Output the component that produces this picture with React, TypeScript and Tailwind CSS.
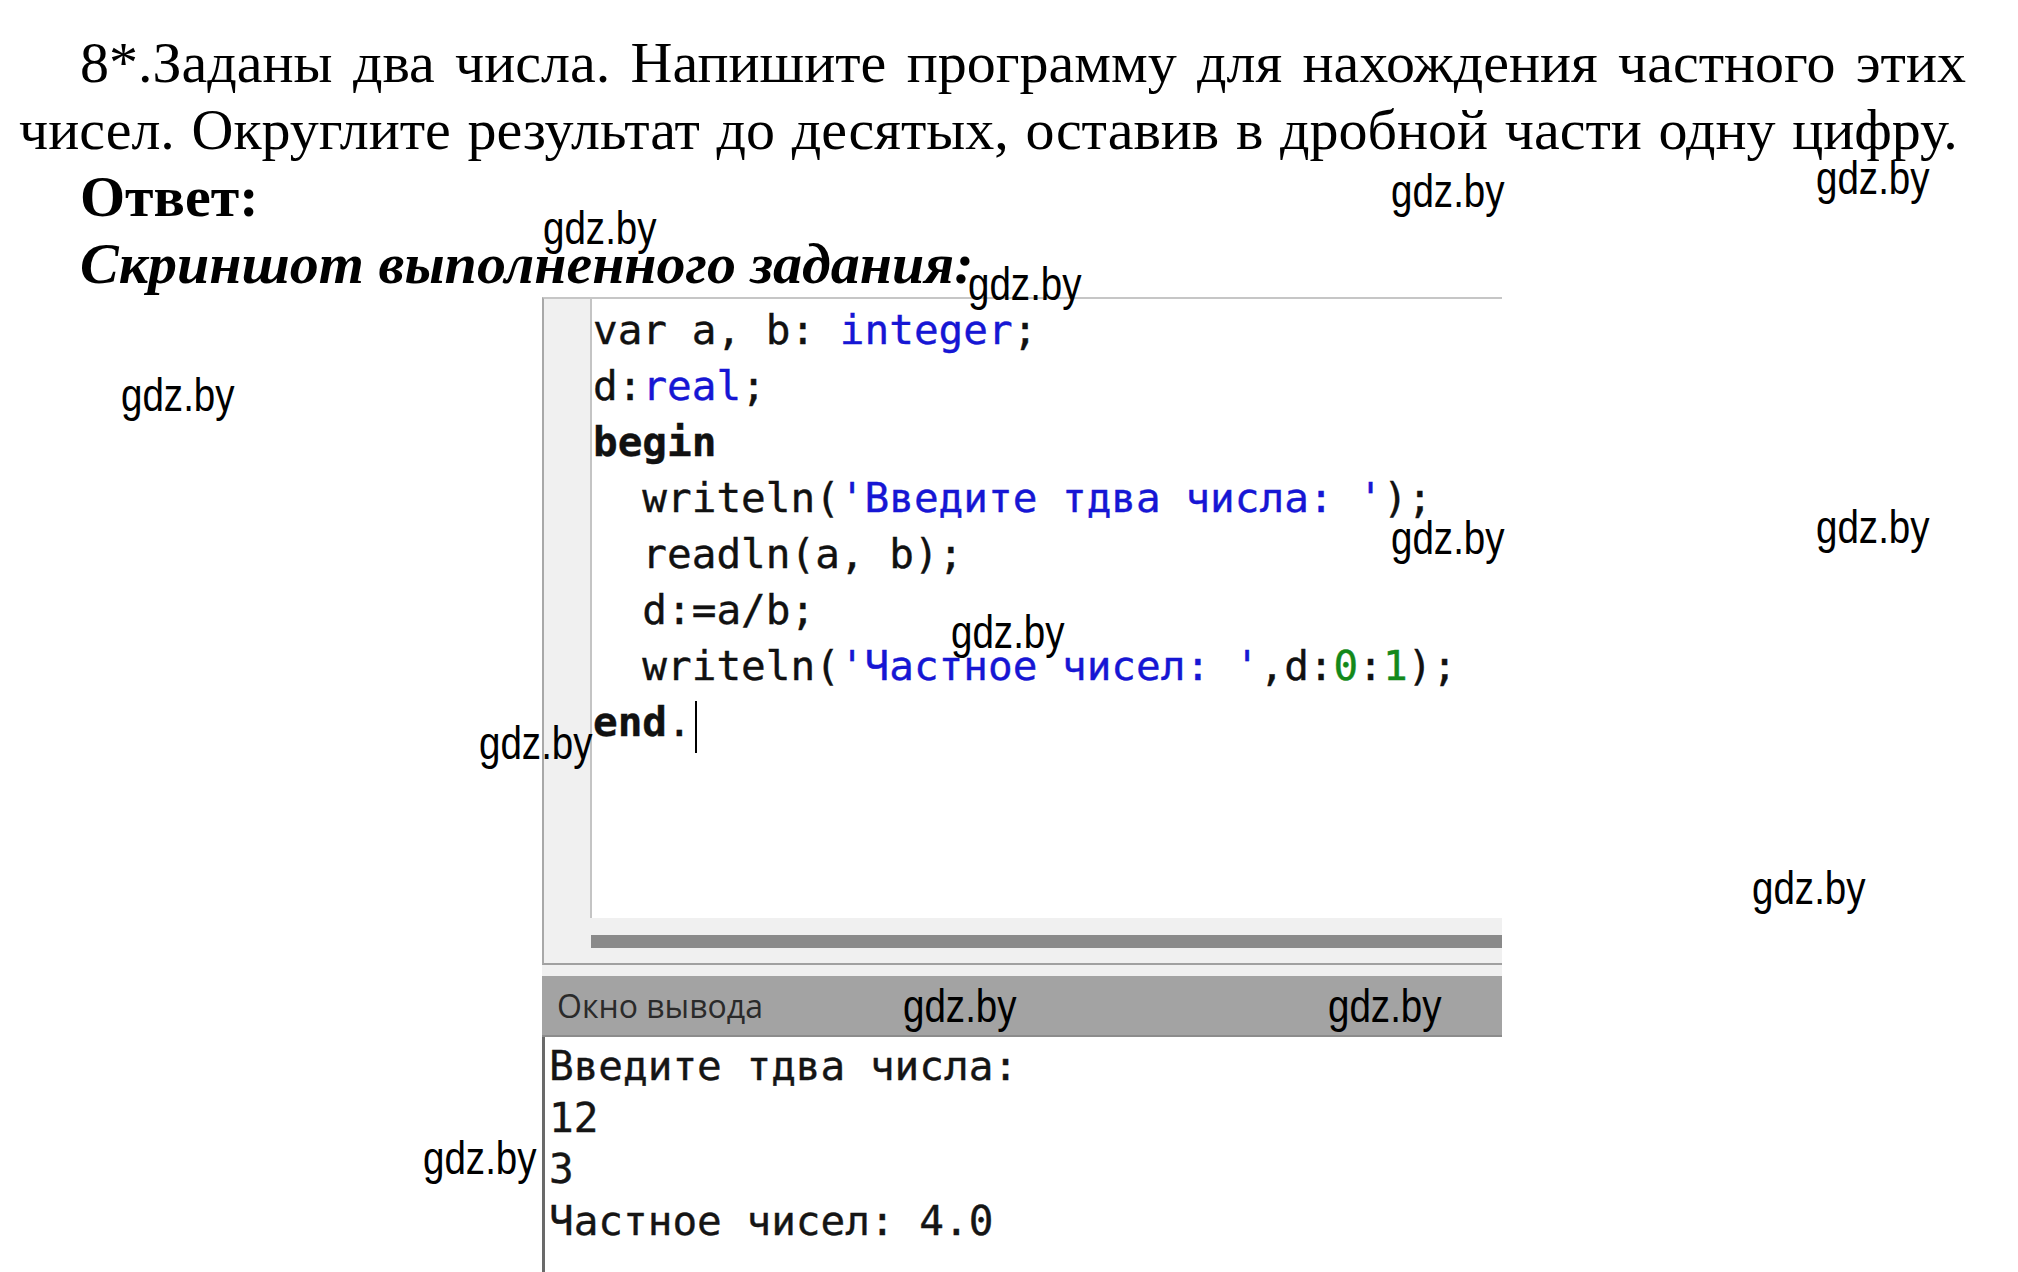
const BLUE = "text-[#1616d4]";
const GREEN = "text-[#13891a]";

// watermark positions, placed over the page
const MARKS: string[] = [
  "left-[543px] top-[204px]",
  "left-[1391px] top-[167px]",
  "left-[1816px] top-[154px]",
  "left-[968px] top-[260px]",
  "left-[121px] top-[371px]",
  "left-[1391px] top-[514px]",
  "left-[1816px] top-[503px]",
  "left-[951px] top-[608px]",
  "left-[479px] top-[719px]",
  "left-[1752px] top-[864px]",
  "left-[903px] top-[982px]",
  "left-[1328px] top-[982px]",
  "left-[423px] top-[1134px]",
];

function Mark({ cls }: { cls: string }) {
  return (
    <span
      className={`pointer-events-none absolute ${cls} origin-top-left scale-x-[0.82] whitespace-nowrap font-['Liberation_Sans',sans-serif] text-[47px] leading-none text-black`}
    >
      gdz.by
    </span>
  );
}

function CodeEditor() {
  return (
    <div className="ml-[542px] w-[960px] font-['DejaVu_Sans_Mono',monospace] text-[41px] text-[#111] [-webkit-text-stroke:0.4px]">
      {/* editor */}
      <div className="border-t-2 border-b-2 border-l-2 border-t-[#c6c6c6] border-b-[#a0a0a0] border-l-[#a8a8a8]">
        <div className="flex h-[619px]">
          <div className="w-[48px] shrink-0 border-r-2 border-[#c4c4c4] bg-[#f0f0f0]" />
          <div className="pt-[3px] pl-px leading-[56px] whitespace-pre">
            <div>var a, b: <span className={BLUE}>integer</span>;</div>
            <div>d:<span className={BLUE}>real</span>;</div>
            <div className="font-bold">begin</div>
            <div>  writeln(<span className={BLUE}>'Введите тдва числа: '</span>);</div>
            <div>  readln(a, b);</div>
            <div>  d:=a/b;</div>
            <div>
              {"  writeln("}
              <span className={BLUE}>'Частное чисел: '</span>,d:<span className={GREEN}>0</span>:
              <span className={GREEN}>1</span>);
            </div>
            <div className="flex items-center">
              <span className="font-bold">end</span>.
              <span className="relative top-[5px] ml-[3px] inline-block h-[52px] w-[2px] bg-black" />
            </div>
          </div>
        </div>
        <div className="h-[45px] bg-[#f0f0f0] pt-[17px] pl-[47px]">
          <div className="h-[13px] bg-[#8a8a8a]" />
        </div>
      </div>
      <div className="h-[11px] bg-[#f0f0f0]" />
      {/* output */}
      <div className="flex h-[61px] items-center border-b-2 border-[#8c8c8c] bg-[#a3a3a3] pl-[15px] font-['Open_Sans',sans-serif] text-[32px] text-[#2a2a2a] [-webkit-text-stroke:0px]">
        Окно вывода
      </div>
      <div className="h-[235px] border-l-[3px] border-[#6a6a6a] pt-[4px] pl-[4px] leading-[51.5px] whitespace-pre text-[#151515]">
        <div>Введите тдва числа:</div>
        <div>12</div>
        <div>3</div>
        <div>Частное чисел: 4.0</div>
      </div>
    </div>
  );
}

export default function App() {
  return (
    <div className="relative h-[1272px] w-[2018px] overflow-hidden bg-white">
      <div className="w-[1966px] pt-[29px] pl-[19px] font-['Liberation_Serif',serif] text-[58px] leading-[67px] text-black">
        <p className="pl-[61px] text-justify [text-align-last:justify]">
          8*.Заданы два числа. Напишите программу для нахождения частного этих
        </p>
        <p className="whitespace-nowrap [word-spacing:2.2px]">
          чисел. Округлите результат до десятых, оставив в дробной части одну цифру.
        </p>
        <p className="pl-[61px] font-bold">Ответ:</p>
        <p className="pl-[61px] font-bold italic">Скриншот выполненного задания:</p>
      </div>

      <CodeEditor />

      {MARKS.map((m) => (
        <Mark key={m} cls={m} />
      ))}
    </div>
  );
}
